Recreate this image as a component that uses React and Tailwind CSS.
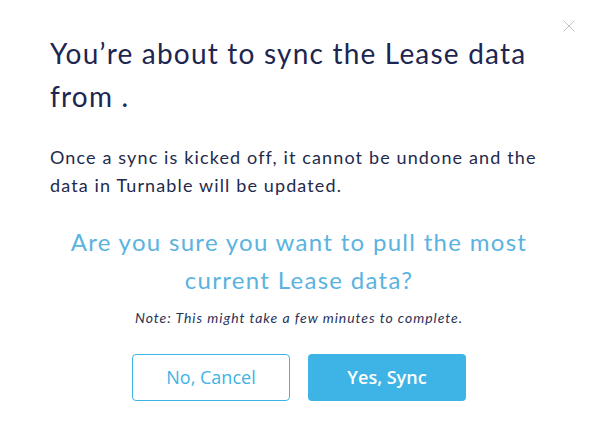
export default function App() {
  return (
    <div className="relative w-[590px] h-[432px] bg-white overflow-hidden">
      <button className="absolute right-[15px] top-[20px] w-[12px] h-[12px] text-[#c4c4c4]" aria-label="Close">
        <svg viewBox="0 0 12 12" width="12" height="12" fill="none" stroke="currentColor" strokeWidth="1">
          <path d="M0.5 0.5L11.5 11.5M11.5 0.5L0.5 11.5" />
        </svg>
      </button>
      <div className="flex flex-col pt-[32px] pl-[50px] pr-[42px] font-['Lato',sans-serif]">
        <h1 className="text-[28px] leading-[43px] tracking-[1.2px] text-[#1c2650] font-normal">
          You’re about to sync the Lease data from .
        </h1>
        <p className="mt-[25px] text-[18px] leading-[28px] tracking-[1.13px] text-[#1f2a4d]">
          Once a sync is kicked off, it cannot be undone and the data in Turnable will be updated.
        </p>
        <p className="mt-[24px] text-center text-[24px] leading-[38px] tracking-[1.3px] text-[#5ab3e0]">
          Are you sure you want to pull the most current Lease data?
        </p>
        <p className="mt-[9px] text-center italic text-[14px] leading-[20px] tracking-[0.95px] text-[#2a3358]">
          Note: This might take a few minutes to complete.
        </p>
        <div className="mt-[26px] flex justify-center gap-[18px] font-['Open_Sans',sans-serif]">
          <button className="w-[158px] h-[47px] rounded-[4px] border border-[#3db4e5] bg-white text-[#3db4e5] text-[18px]">
            No, Cancel
          </button>
          <button className="w-[158px] h-[47px] rounded-[4px] bg-[#3db4e5] text-white text-[18px] font-semibold">
            Yes, Sync
          </button>
        </div>
      </div>
    </div>
  );
}
